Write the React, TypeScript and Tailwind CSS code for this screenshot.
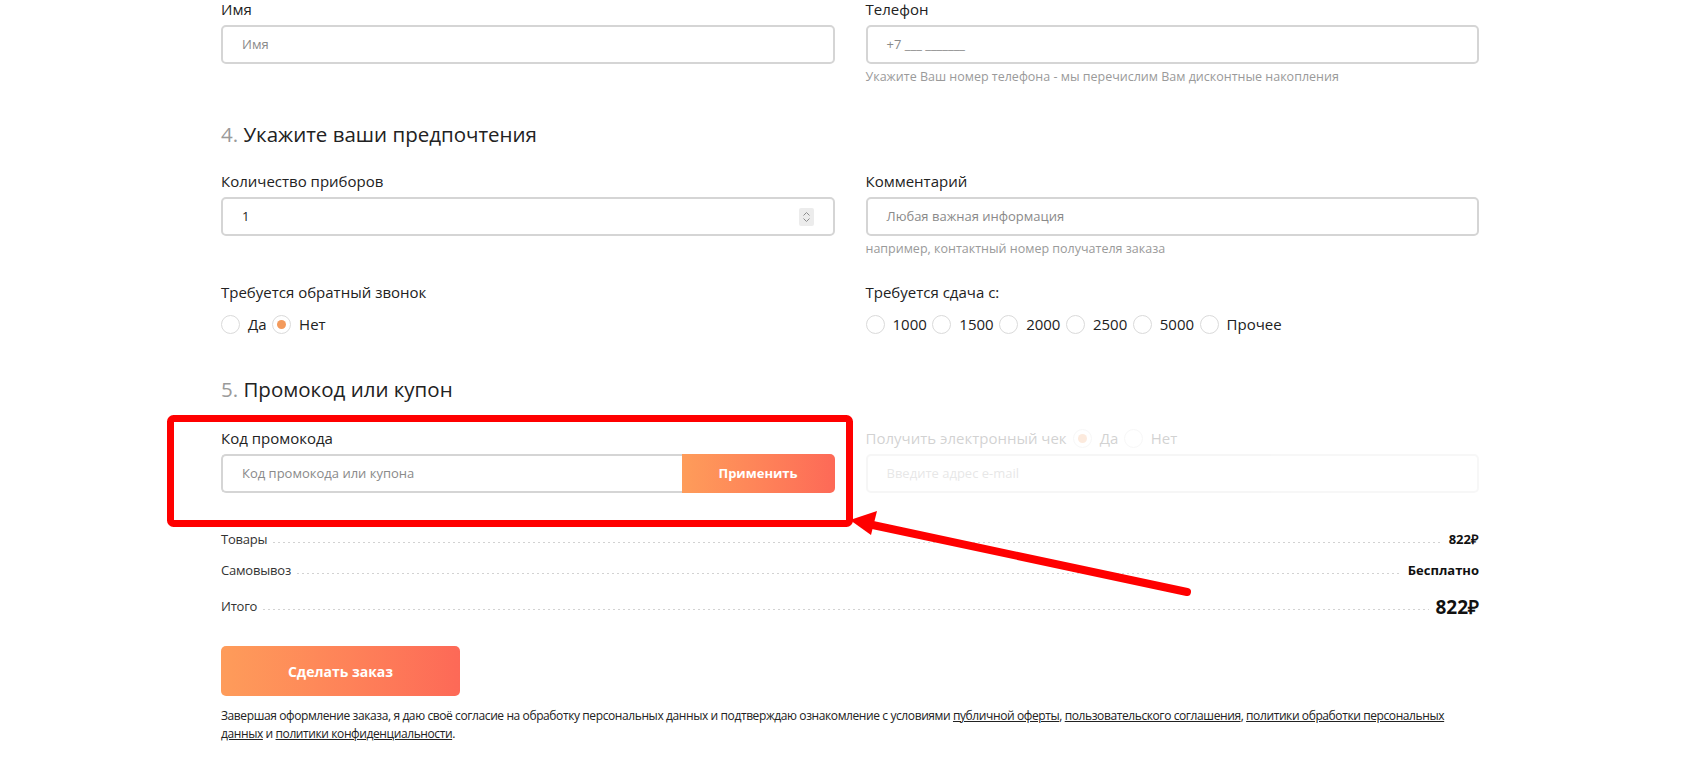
import React from "react";

function Label({ children, className = "" }: { children: React.ReactNode; className?: string }) {
  return <div className={`text-[15px] leading-[18px] text-[#222] ${className}`}>{children}</div>;
}

function TextInput({ placeholder, value }: { placeholder?: string; value?: string }) {
  return (
    <div className="mt-[7px] flex h-[39px] items-center rounded-[5px] border-2 border-[#d5d5d5] bg-white pl-[19px]">
      {value ? (
        <span className="text-[13px] text-[#222]">{value}</span>
      ) : (
        <span className="text-[13px] text-[#8a8a8a]">{placeholder}</span>
      )}
    </div>
  );
}

function Helper({ children }: { children: React.ReactNode }) {
  return <div className="mt-[5px] text-[12.5px] leading-[16px] text-[#9a9a9a]">{children}</div>;
}

function Radio({ label, checked = false }: { label: string; checked?: boolean }) {
  return (
    <label className="flex items-center">
      <span className="flex h-[19px] w-[19px] items-center justify-center rounded-full border border-[#dadada] bg-white">
        {checked && <span className="h-[9px] w-[9px] rounded-full bg-[#f39a5c]" />}
      </span>
      <span className="ml-[8px] mr-[5.5px] text-[15px] leading-[20px] text-[#222]">{label}</span>
    </label>
  );
}

function Heading({ num, title }: { num: string; title: string }) {
  return (
    <h2 className="text-[20.5px] leading-[28px] font-normal text-[#222]">
      <span className="text-[#9a9a9a]">{num}</span> {title}
    </h2>
  );
}

function TotalRow({
  label,
  value,
  big = false,
}: {
  label: string;
  value: string;
  big?: boolean;
}) {
  return (
    <div className={`flex items-center ${big ? "h-[24px]" : "h-[20px]"}`}>
      <span className="text-[13px] tracking-[-0.2px] text-[#333]">{label}</span>
      <span className="mx-[6px] h-px flex-1 translate-y-[2px] bg-[linear-gradient(to_right,#d2d2d2_50%,transparent_50%)] bg-[length:5px_1px] bg-repeat-x" />
      <span className={`font-bold text-[#111] ${big ? "text-[19px]" : "text-[13px]"}`}>{value}</span>
    </div>
  );
}

function Spinner() {
  return (
    <div className="flex h-[18px] w-[15px] flex-col items-center justify-center rounded-[2px] bg-[#ececec]">
      <svg width="9" height="6" viewBox="0 0 9 6" fill="none">
        <path d="M1.5 4.5 L4.5 1.5 L7.5 4.5" stroke="#8c8c8c" strokeWidth="1" />
      </svg>
      <svg width="9" height="6" viewBox="0 0 9 6" fill="none">
        <path d="M1.5 1.5 L4.5 4.5 L7.5 1.5" stroke="#8c8c8c" strokeWidth="1" />
      </svg>
    </div>
  );
}

export default function App() {
  return (
    <div className="relative h-[764px] w-full overflow-hidden bg-white font-['Open_Sans',sans-serif]">
      <div className="pl-[221px]">
        <div className="w-[1258px]">
          {/* contact details */}
          <div className="grid grid-cols-2 gap-x-[31px]">
            <div>
              <Label>Имя</Label>
              <TextInput placeholder="Имя" />
            </div>
            <div>
              <Label>Телефон</Label>
              <TextInput placeholder="+7 ___ _______" />
              <Helper>Укажите Ваш номер телефона - мы перечислим Вам дисконтные накопления</Helper>
            </div>
          </div>

          {/* preferences */}
          <div className="mt-[35px]">
            <Heading num="4." title="Укажите ваши предпочтения" />
          </div>
          <div className="mt-[24px] grid grid-cols-2 gap-x-[31px]">
            <div>
              <Label>Количество приборов</Label>
              <div className="mt-[7px] flex h-[39px] items-center justify-between rounded-[5px] border-2 border-[#d5d5d5] bg-white pl-[19px] pr-[19px]">
                <span className="text-[13px] text-[#222]">1</span>
                <Spinner />
              </div>
            </div>
            <div>
              <Label>Комментарий</Label>
              <TextInput placeholder="Любая важная информация" />
              <Helper>например, контактный номер получателя заказа</Helper>
            </div>
          </div>

          <div className="mt-[26px] grid grid-cols-2 gap-x-[31px]">
            <div>
              <Label>Требуется обратный звонок</Label>
              <div className="mt-[13px] flex items-center">
                <Radio label="Да" />
                <Radio label="Нет" checked />
              </div>
            </div>
            <div>
              <Label>Требуется сдача с:</Label>
              <div className="mt-[13px] flex items-center">
                <Radio label="1000" />
                <Radio label="1500" />
                <Radio label="2000" />
                <Radio label="2500" />
                <Radio label="5000" />
                <Radio label="Прочее" />
              </div>
            </div>
          </div>

          {/* promo code */}
          <div className="mt-[41px]">
            <Heading num="5." title="Промокод или купон" />
          </div>
          <div className="mt-[26px] grid grid-cols-2 gap-x-[31px]">
            <div>
              <Label>Код промокода</Label>
              <div className="mt-[7px] flex h-[39px]">
                <div className="flex flex-1 items-center rounded-l-[5px] border-2 border-r-0 border-[#d5d5d5] pl-[19px]">
                  <span className="text-[13px] text-[#8a8a8a]">Код промокода или купона</span>
                </div>
                <button className="w-[153px] rounded-r-[5px] bg-gradient-to-r from-[#fe9c5a] to-[#fd6957] text-[13px] font-bold text-white">
                  Применить
                </button>
              </div>
            </div>
            <div className="opacity-20">
              <div className="flex h-[18px] items-center">
                <span className="mr-[6px] text-[15px] leading-[18px] text-[#222]">Получить электронный чек</span>
                <Radio label="Да" checked />
                <Radio label="Нет" />
              </div>
              <div className="mt-[7px] flex h-[39px] items-center rounded-[5px] border-2 border-[#d5d5d5] pl-[19px]">
                <span className="text-[13px] text-[#8a8a8a]">Введите адрес e-mail</span>
              </div>
            </div>
          </div>

          {/* totals */}
          <div className="mt-[37px] flex flex-col">
            <TotalRow label="Товары" value="822₽" />
            <div className="mt-[11px]">
              <TotalRow label="Самовывоз" value="Бесплатно" />
            </div>
            <div className="mt-[14px]">
              <TotalRow label="Итого" value="822₽" big />
            </div>
          </div>

          <button className="mt-[27px] h-[50px] w-[239px] rounded-[5px] bg-gradient-to-r from-[#fe9c5a] to-[#fd6957] text-[14px] font-bold text-white">
            Сделать заказ
          </button>

          <p className="mt-[11px] text-[12px] leading-[18px] tracking-[-0.4px] text-[#222]">
            Завершая оформление заказа, я даю своё согласие на обработку персональных данных и подтверждаю
            ознакомление с условиями <a className="underline">публичной оферты</a>,{" "}
            <a className="underline">пользовательского соглашения</a>,{" "}
            <a className="underline">политики обработки персональных данных</a> и{" "}
            <a className="underline">политики конфиденциальности</a>.
          </p>
        </div>
      </div>

      {/* red callout over the promo code field */}
      <svg
        className="pointer-events-none absolute left-0 top-0"
        width="1687"
        height="764"
        viewBox="0 0 1687 764"
      >
        <rect x="170.5" y="418.5" width="679" height="105" rx="3" fill="none" stroke="#f00" strokeWidth="7" />
        <line x1="1187" y1="592" x2="868" y2="524" stroke="#f00" strokeWidth="8" strokeLinecap="round" />
        <polygon points="850,520 877,511 871,535" fill="#f00" />
      </svg>
    </div>
  );
}
